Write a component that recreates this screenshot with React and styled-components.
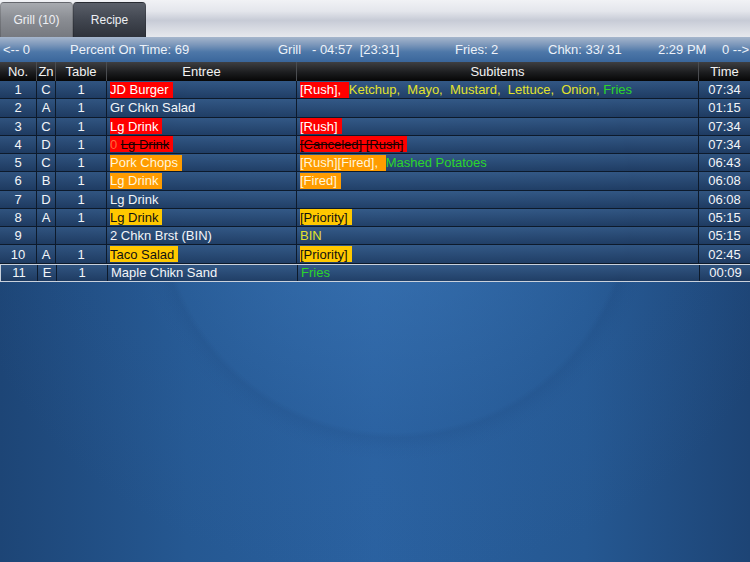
import React from "react";
import styled, { createGlobalStyle, css } from "styled-components";

const GlobalStyle = createGlobalStyle`
    html, body {
        margin: 0;
        padding: 0;
        height: 100%;
    }
    body {
        font-family: "Liberation Sans", Arial, sans-serif;
        background: #1f4a7c;
    }
    #root {
        height: 100%;
    }
`;

const COLS = "37px 19px 51px 190px 402px 51px";

const tabs = [
    { label: "Grill (10)", active: true },
    { label: "Recipe", active: false }
];

const status = [
    "<-- 0",
    "Percent On Time: 69",
    "Grill\u00a0\u00a0\u00a0- 04:57\u00a0\u00a0[23:31]",
    "Fries: 2",
    "Chkn: 33/ 31",
    "2:29 PM",
    "0 -->"
];

const headers = ["No.", "Zn", "Table", "Entree", "Subitems", "Time"];

// chip kinds: red, orange, yellow; text tones: y (yellow), g (green), w (white)
const orders = [
    {
        no: 1, zn: "C", table: "1", time: "07:34",
        entree: { text: "JD Burger", chip: "red" },
        subs: [
            { text: "[Rush], ", chip: "red" },
            { text: "Ketchup,\u00a0 Mayo,\u00a0 Mustard,\u00a0 Lettuce,\u00a0 Onion,\u00a0", tone: "y" },
            { text: "Fries", tone: "g" }
        ]
    },
    { no: 2, zn: "A", table: "1", time: "01:15", entree: { text: "Gr Chkn Salad" }, subs: [] },
    {
        no: 3, zn: "C", table: "1", time: "07:34",
        entree: { text: "Lg Drink", chip: "red" },
        subs: [{ text: "[Rush]", chip: "red" }]
    },
    {
        no: 4, zn: "D", table: "1", time: "07:34",
        entree: { text: "Lg Drink", chip: "red", prefix: "0 ", struck: true },
        subs: [{ text: "[Canceled] [Rush]", chip: "red", struck: true }]
    },
    {
        no: 5, zn: "C", table: "1", time: "06:43",
        entree: { text: "Pork Chops", chip: "orange" },
        subs: [
            { text: "[Rush][Fired], ", chip: "orange" },
            { text: "Mashed Potatoes", tone: "g" }
        ]
    },
    {
        no: 6, zn: "B", table: "1", time: "06:08",
        entree: { text: "Lg Drink", chip: "orange" },
        subs: [{ text: "[Fired]", chip: "orange" }]
    },
    { no: 7, zn: "D", table: "1", time: "06:08", entree: { text: "Lg Drink" }, subs: [] },
    {
        no: 8, zn: "A", table: "1", time: "05:15",
        entree: { text: "Lg Drink", chip: "yellow" },
        subs: [{ text: "[Priority]", chip: "yellow" }]
    },
    {
        no: 9, zn: "", table: "", time: "05:15",
        entree: { text: "2 Chkn Brst (BIN)" },
        subs: [{ text: "BIN", tone: "y" }]
    },
    {
        no: 10, zn: "A", table: "1", time: "02:45",
        entree: { text: "Taco Salad", chip: "yellow" },
        subs: [{ text: "[Priority]", chip: "yellow" }]
    },
    {
        no: 11, zn: "E", table: "1", time: "00:09", selected: true,
        entree: { text: "Maple Chikn Sand" },
        subs: [{ text: "Fries", tone: "g" }]
    }
];

const Entry = ({ item }) => {
    if (!item.chip) return <Tone $tone={item.tone}>{item.text}</Tone>;
    return (
        <Chip $kind={item.chip} $struck={item.struck}>
            {item.prefix && <Prefix>{item.prefix}</Prefix>}
            <ChipText $struck={item.struck}>{item.text}</ChipText>
        </Chip>
    );
};

const App = () => (
    <Page>
        <GlobalStyle />
        <TopBar>
            {tabs.map(t => (
                <Tab key={t.label} $active={t.active}>
                    {t.label}
                </Tab>
            ))}
        </TopBar>
        <StatusBar>
            {status.map((s, i) => (
                <StatusItem key={i}>{s}</StatusItem>
            ))}
        </StatusBar>
        <HeaderRow>
            {headers.map(h => (
                <HeadCell key={h}>{h}</HeadCell>
            ))}
        </HeaderRow>
        {orders.map(o => (
            <Row key={o.no} $selected={o.selected}>
                <Cell $align="center">{o.no}</Cell>
                <Cell $align="center">{o.zn}</Cell>
                <Cell $align="center">{o.table}</Cell>
                <Cell>
                    <Entry item={o.entree} />
                </Cell>
                <Cell>
                    {o.subs.map((s, i) => (
                        <Entry key={i} item={s} />
                    ))}
                </Cell>
                <Cell $align="center">{o.time}</Cell>
            </Row>
        ))}
    </Page>
);

const Page = styled.div`
    min-height: 562px;
    height: 100%;
    overflow: hidden;
    background:
        radial-gradient(circle at 395px 200px, transparent 232px, rgba(10, 30, 70, 0.07) 238px, rgba(10, 30, 70, 0.02) 250px, transparent 262px),
        radial-gradient(ellipse 420px 360px at 380px 220px, rgba(70, 130, 195, 0.45), rgba(50, 105, 170, 0.15) 60%, transparent 100%),
        linear-gradient(90deg, #1d4576 0%, #255892 25%, #2a61a0 50%, #255892 78%, #1d4475 100%);
`;

const TopBar = styled.div`
    height: 37px;
    display: flex;
    align-items: flex-end;
    background: linear-gradient(
        180deg,
        #f1f2f5 0%,
        #e4e6ec 30%,
        #c7cbd6 55%,
        #d6d9e1 75%,
        #e6e8ed 100%
    );
`;

const Tab = styled.div`
    width: 73px;
    height: 35px;
    display: flex;
    align-items: center;
    justify-content: center;
    font-size: 12px;
    color: #eef0f4;
    border-radius: 4px 4px 0 0;
    box-sizing: border-box;
    border: 1px solid rgba(0, 0, 0, 0.15);
    border-bottom: none;
    ${p =>
        p.$active
            ? css`
                  background: linear-gradient(180deg, #a7aaaf 0%, #8b8e94 45%, #76797f 100%);
              `
            : css`
                  background: linear-gradient(180deg, #5a5f69 0%, #434852 45%, #2e323a 100%);
              `}
`;

const StatusBar = styled.div`
    height: 25px;
    display: grid;
    grid-template-columns: 67px 208px 177px 93px 110px 64px 1fr;
    align-items: center;
    padding-left: 3px;
    font-size: 13px;
    color: #edf2f9;
    white-space: nowrap;
    background: linear-gradient(
        180deg,
        #a6b6cc 0%,
        #7d98bb 30%,
        #4d77a8 60%,
        #3a669b 100%
    );
`;

const StatusItem = styled.div``;

const HeaderRow = styled.div`
    display: grid;
    grid-template-columns: ${COLS};
    height: 19px;
    background: linear-gradient(180deg, #3e3f42 0%, #1c1d1f 55%, #060606 100%);
`;

const HeadCell = styled.div`
    display: flex;
    align-items: center;
    justify-content: center;
    font-size: 13px;
    color: #f2f2f2;
    border-right: 1px solid #4a4c50;
    &:last-child {
        border-right: none;
    }
`;

const Row = styled.div`
    display: grid;
    grid-template-columns: ${COLS};
    height: 18.27px;
    box-sizing: border-box;
    border-bottom: 1px solid #0d1a2b;
    background: linear-gradient(180deg, rgba(52, 86, 128, 0.82) 0%, rgba(30, 56, 92, 0.85) 100%);
    ${p =>
        p.$selected &&
        css`
            border: 1px solid #c9d1dc;
            border-right: none;
        `}
`;

const Cell = styled.div`
    display: flex;
    align-items: center;
    justify-content: ${p => (p.$align === "center" ? "center" : "flex-start")};
    padding-left: ${p => (p.$align === "center" ? "0" : "3px")};
    font-size: 13px;
    color: #f3f5f8;
    white-space: pre;
    overflow: hidden;
    border-right: 1px solid #0d1a2b;
    &:last-child {
        border-right: none;
    }
`;

const chipColors = {
    red: { bg: "#ff0000", fg: "#ffffff" },
    orange: { bg: "#ff9c00", fg: "#fff6dc" },
    yellow: { bg: "#ffc800", fg: "#111111" }
};

const Chip = styled.span`
    display: inline-flex;
    align-items: center;
    height: 16px;
    padding: 0 4px 0 0;
    background: ${p => chipColors[p.$kind].bg};
    color: ${p => (p.$struck ? "#1a0000" : chipColors[p.$kind].fg)};
`;

const ChipText = styled.span`
    text-decoration: ${p => (p.$struck ? "line-through" : "none")};
`;

const Prefix = styled.span`
    color: #ff6a3a;
`;

const tones = { y: "#e3e22c", g: "#2bd62b", w: "#f3f5f8" };

const Tone = styled.span`
    color: ${p => tones[p.$tone || "w"]};
`;

export default App;
